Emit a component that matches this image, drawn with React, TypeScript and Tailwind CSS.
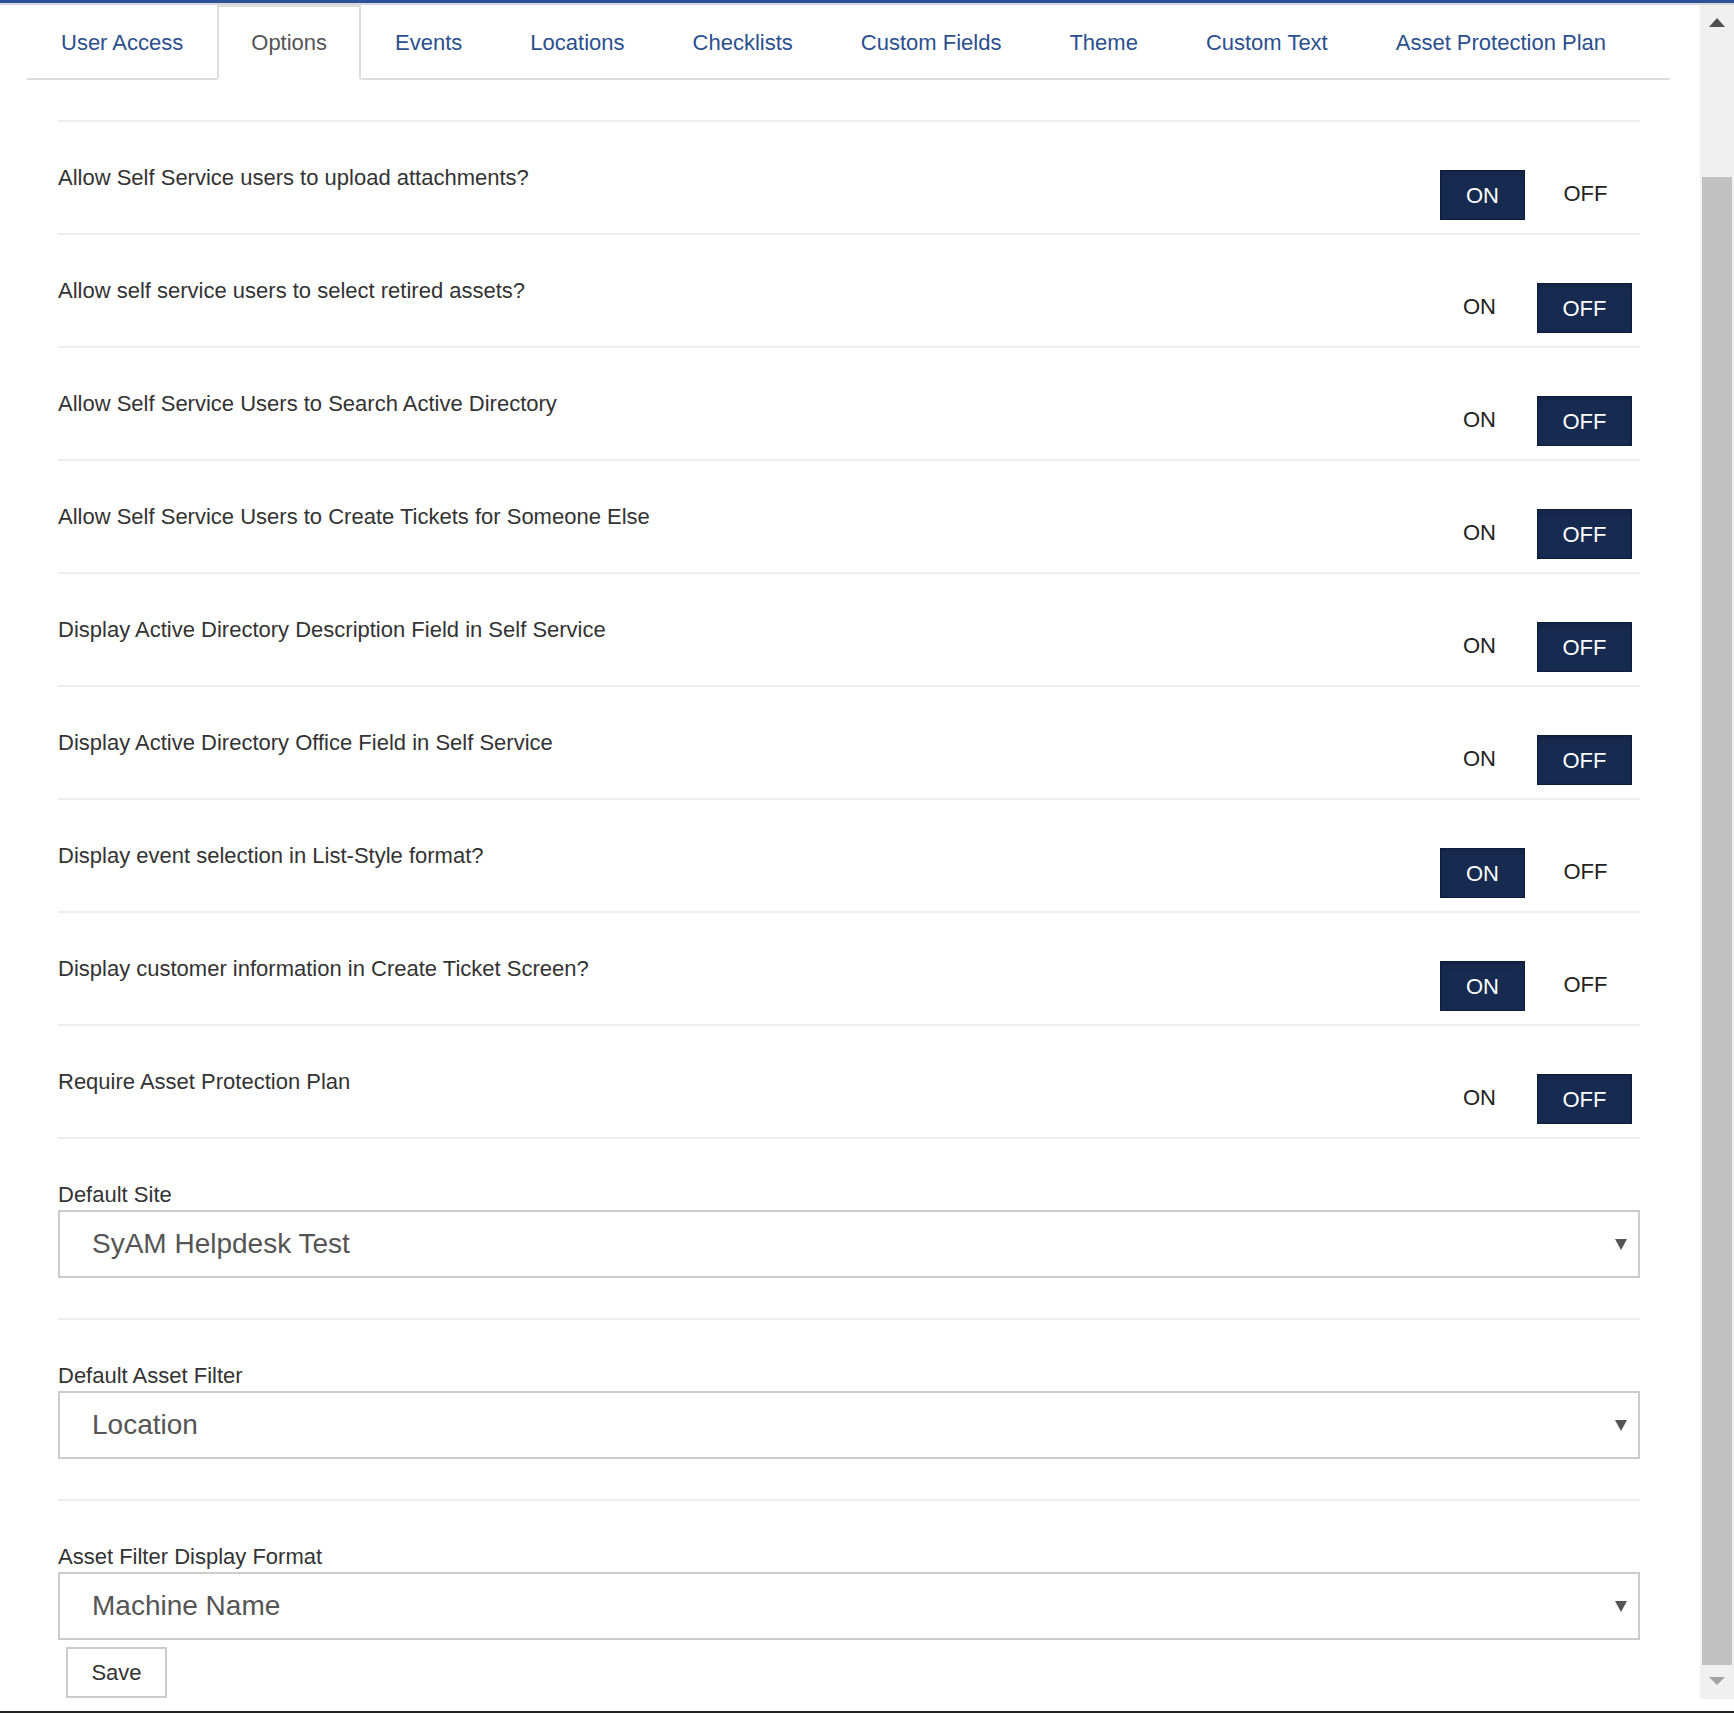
import React from 'react';

const tabs = [
    'User Access',
    'Options',
    'Events',
    'Locations',
    'Checklists',
    'Custom Fields',
    'Theme',
    'Custom Text',
    'Asset Protection Plan',
];

const toggles: Array<{ label: string; on: boolean }> = [
    { label: 'Allow Self Service users to upload attachments?', on: true },
    { label: 'Allow self service users to select retired assets?', on: false },
    { label: 'Allow Self Service Users to Search Active Directory', on: false },
    { label: 'Allow Self Service Users to Create Tickets for Someone Else', on: false },
    { label: 'Display Active Directory Description Field in Self Service', on: false },
    { label: 'Display Active Directory Office Field in Self Service', on: false },
    { label: 'Display event selection in List-Style format?', on: true },
    { label: 'Display customer information in Create Ticket Screen?', on: true },
    { label: 'Require Asset Protection Plan', on: false },
];

const selects = [
    { label: 'Default Site', value: 'SyAM Helpdesk Test' },
    { label: 'Default Asset Filter', value: 'Location' },
    { label: 'Asset Filter Display Format', value: 'Machine Name' },
];

function ToggleButton({ text, active, width, nudge }: { text: string; active: boolean; width: string; nudge: string }) {
    const base = `${width} h-[50px] flex items-center justify-center text-[22px] border`;
    if (active) {
        return (
            <div className={`${base} bg-[#172a50] border-[#0e1c39] text-white shadow-[inset_0_3px_5px_rgba(0,0,0,0.15)]`}>
                {text}
            </div>
        );
    }
    return <div className={`${base} ${nudge} border-transparent text-[#222] pb-[3px]`}>{text}</div>;
}

function ToggleRow({ label, on }: { label: string; on: boolean }) {
    return (
        <div className="flex justify-between items-start border-t-2 border-[#eeeeee] pr-[8px]">
            <div className="pt-[40px] text-[22px] leading-[31px] text-[#333]">{label}</div>
            <div className="flex gap-[12px] mt-[48px] mb-[13px]">
                <ToggleButton text="ON" active={on} width="w-[85px]" nudge="pr-[6px]" />
                <ToggleButton text="OFF" active={!on} width="w-[95px]" nudge="pl-[2px]" />
            </div>
        </div>
    );
}

function SelectField({ label, value, last }: { label: string; value: string; last: boolean }) {
    return (
        <div className={`border-t-2 border-[#eeeeee] pt-[40px] ${last ? '' : 'pb-[40px]'}`}>
            <div className="text-[22px] leading-[31px] text-[#333]">{label}</div>
            <div className="h-[68px] border-2 border-[#cccccc] flex items-center justify-between pl-[32px] pr-[11px]">
                <span className="text-[28px] text-[#555]">{value}</span>
                <svg width="12" height="11" viewBox="0 0 12 11">
                    <polygon points="0,0 12,0 6,11" fill="#555" />
                </svg>
            </div>
        </div>
    );
}

export default function App() {
    return (
        <div
            className="w-[1734px] h-[1713px] overflow-hidden bg-white flex flex-col"
            style={{ fontFamily: '"Liberation Sans", Arial, sans-serif' }}
        >
            <div className="h-[3px] bg-[#2a5298]" />
            <div className="h-[2px] bg-[#d8d8d8]" />

            <div className="flex h-[1694px]">
                <div className="flex-1">
                    {/* tabs */}
                    <div className="ml-[27px] w-[1643px] flex border-b-2 border-[#dddddd]">
                        {tabs.map(tab => {
                            const active = tab === 'Options';
                            return (
                                <div
                                    key={tab}
                                    className={
                                        active
                                            ? 'h-[75px] -mb-[2px] px-[32px] flex items-center border-2 border-[#dddddd] border-b-white bg-white text-[22px] text-[#555]'
                                            : 'h-[75px] -mb-[2px] px-[32px] flex items-center border-2 border-transparent text-[22px] text-[#2b4f8e]'
                                    }
                                >
                                    {tab}
                                </div>
                            );
                        })}
                    </div>

                    {/* options */}
                    <div className="ml-[58px] w-[1582px] mt-[40px]">
                        {toggles.map(t => (
                            <ToggleRow key={t.label} label={t.label} on={t.on} />
                        ))}
                        {selects.map((s, i) => (
                            <SelectField key={s.label} label={s.label} value={s.value} last={i === selects.length - 1} />
                        ))}
                        <div className="mt-[7px] ml-[8px] w-[101px] h-[51px] border-2 border-[#cccccc] flex items-center justify-center text-[22px] text-[#333]">
                            Save
                        </div>
                    </div>
                </div>

                {/* scrollbar */}
                <div className="w-[34px] bg-[#f0f0f0] flex flex-col">
                    <div className="h-[172px] flex justify-center pt-[13px]">
                        <svg width="16" height="9" viewBox="0 0 16 9">
                            <polygon points="8,0 16,9 0,9" fill="#505050" />
                        </svg>
                    </div>
                    <div className="h-[1488px] mx-[2px] bg-[#c1c1c1]" />
                    <div className="flex-1 flex justify-center pt-[12px]">
                        <svg width="16" height="8" viewBox="0 0 16 8">
                            <polygon points="0,0 16,0 8,8" fill="#a3a3a3" />
                        </svg>
                    </div>
                </div>
            </div>

            <div className="h-[12px] bg-white" />
            <div className="h-[2px] bg-[#222]" />
        </div>
    );
}
